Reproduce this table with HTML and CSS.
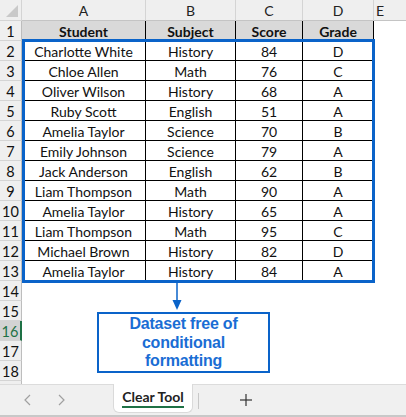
FILE: index.html
```html
<!DOCTYPE html>
<html>
<head>
<meta charset="utf-8">
<link rel="stylesheet" href="styles.css">
</head>
<body>
<div class="app">
  <div class="sheet">
    <div class="grid">
      <div class="corner"><svg width="22" height="21" viewBox="0 0 22 21"><polygon points="18,5 18,17 6,17" fill="#c9c9c9"/></svg></div>
      <div class="ch">A</div><div class="ch">B</div><div class="ch">C</div><div class="ch">D</div><div class="ch ch-e">E</div>

      <div class="rh">1</div><div class="hd">Student</div><div class="hd">Subject</div><div class="hd">Score</div><div class="hd">Grade</div><div class="ec"></div>
      <div class="rh">2</div><div class="dc">Charlotte White</div><div class="dc">History</div><div class="dc">84</div><div class="dc">D</div><div class="ec"></div>
      <div class="rh">3</div><div class="dc">Chloe Allen</div><div class="dc">Math</div><div class="dc">76</div><div class="dc">C</div><div class="ec"></div>
      <div class="rh">4</div><div class="dc">Oliver Wilson</div><div class="dc">History</div><div class="dc">68</div><div class="dc">A</div><div class="ec"></div>
      <div class="rh">5</div><div class="dc">Ruby Scott</div><div class="dc">English</div><div class="dc">51</div><div class="dc">A</div><div class="ec"></div>
      <div class="rh">6</div><div class="dc">Amelia Taylor</div><div class="dc">Science</div><div class="dc">70</div><div class="dc">B</div><div class="ec"></div>
      <div class="rh">7</div><div class="dc">Emily Johnson</div><div class="dc">Science</div><div class="dc">79</div><div class="dc">A</div><div class="ec"></div>
      <div class="rh">8</div><div class="dc">Jack Anderson</div><div class="dc">English</div><div class="dc">62</div><div class="dc">B</div><div class="ec"></div>
      <div class="rh">9</div><div class="dc">Liam Thompson</div><div class="dc">Math</div><div class="dc">90</div><div class="dc">A</div><div class="ec"></div>
      <div class="rh">10</div><div class="dc">Amelia Taylor</div><div class="dc">History</div><div class="dc">65</div><div class="dc">A</div><div class="ec"></div>
      <div class="rh">11</div><div class="dc">Liam Thompson</div><div class="dc">Math</div><div class="dc">95</div><div class="dc">C</div><div class="ec"></div>
      <div class="rh">12</div><div class="dc">Michael Brown</div><div class="dc">History</div><div class="dc">82</div><div class="dc">D</div><div class="ec"></div>
      <div class="rh">13</div><div class="dc">Amelia Taylor</div><div class="dc">History</div><div class="dc">84</div><div class="dc">A</div><div class="ec"></div>
      <div class="rh">14</div><div class="blank"></div>
      <div class="rh">15</div><div class="blank"></div>
      <div class="rh rh-sel">16</div><div class="blank"></div>
      <div class="rh">17</div><div class="blank"></div>
      <div class="rh">18</div><div class="blank"></div>
      <div class="rh"></div><div class="blank"></div>
    </div>
    <div class="range"></div>
    <svg class="arrow" width="12" height="30" viewBox="0 0 12 30"><line x1="6" y1="0" x2="6" y2="20" stroke="#0a63c9" stroke-width="1.5"/><polygon points="1.5,18 10.5,18 6,28" fill="#0a63c9"/></svg>
    <div class="callout">Dataset free of<br>conditional<br>formatting</div>
  </div>
  <div class="tabbar">
    <div class="nav">
      <svg width="10" height="14" viewBox="0 0 10 14"><polyline points="7,2 2,7 7,12" fill="none" stroke="#a0a0a0" stroke-width="1.2"/></svg>
      <svg width="10" height="14" viewBox="0 0 10 14"><polyline points="3,2 8,7 3,12" fill="none" stroke="#a0a0a0" stroke-width="1.2"/></svg>
    </div>
    <div class="tab">Clear Tool</div>
    <div class="sep"></div>
    <div class="add"><svg width="14" height="14" viewBox="0 0 14 14"><line x1="7" y1="1" x2="7" y2="13" stroke="#333" stroke-width="1.2"/><line x1="1" y1="7" x2="13" y2="7" stroke="#333" stroke-width="1.2"/></svg></div>
  </div>
</div>
</body>
</html>
```

FILE: styles.css
```css
* { box-sizing: border-box; }
html, body { margin: 0; padding: 0; background: #fff; }
.app { width: 406px; height: 417px; overflow: hidden; font-family: Lato, "Open Sans", sans-serif; }
.sheet { position: relative; height: 384px; overflow: hidden; }
.grid {
  display: grid;
  grid-template-columns: 22px 124px 90px 67px 71px 32px;
  grid-template-rows: 21px repeat(19, 20px);
}
.corner { background: #efefef; border-right: 1px solid #d4d4d4; border-bottom: 1px solid #d4d4d4; }
.corner svg { display: block; }
.ch {
  background: #efefef; border-right: 1px solid #d4d4d4; border-bottom: 1px solid #c4c4c4;
  display: flex; align-items: center; justify-content: center;
  font-size: 14px; color: #222;
}
.ch-e { justify-content: flex-start; padding-left: 2px; border-right: none; }
.rh {
  background: #efefef; border-right: 1px solid #bdbdbd; border-bottom: 1px solid #d4d4d4;
  display: flex; align-items: center; justify-content: center;
  font-size: 14.5px; color: #111; padding-top: 1px;
}
.rh-sel { background: #d3d3d3; color: #1e7145; border-right: 2px solid #1e7145; }
.hd, .dc {
  border-right: 1px solid #000; border-bottom: 1px solid #000;
  display: flex; align-items: center; justify-content: center;
  font-size: 14px; color: #111; white-space: nowrap; padding-top: 1px;
}
.hd { background: #d9d9d9; font-weight: 700; }
.ec { background: #fff; }
.blank { grid-column: 2 / 7; background: #fff; }
.range {
  position: absolute; left: 22px; top: 39px; width: 353px; height: 244px;
  border: 3px solid #0a63c9;
}
.arrow { position: absolute; left: 171px; top: 282px; }
.callout {
  position: absolute; left: 97px; top: 312px; width: 173px; height: 61px;
  border: 2px solid #0a63c9; background: #fff;
  font-family: "Liberation Sans", Arial, sans-serif; font-weight: 700; font-size: 16px;
  line-height: 18.5px; color: #1a6dd4; text-align: center; letter-spacing: -0.2px;
  padding-top: 1px;
}
.tabbar {
  height: 33px; background: #f0f0f0; border-top: 1px solid #dcdcdc; border-bottom: 2px solid #c8c8c8;
  display: flex; align-items: flex-start; position: relative;
}
.nav { width: 113px; display: flex; gap: 23px; padding-left: 23px; padding-top: 8px; }
.nav svg { display: block; }
.tab {
  margin-top: -1px; width: 80px; height: 29px; background: #fff;
  border: 1px solid #dadada; border-top: none; border-radius: 0 0 6px 6px;
  font-size: 14px; font-weight: 700; color: #222;
  display: flex; align-items: center; justify-content: center; position: relative; padding-bottom: 3px;
}
.tab::after {
  content: ""; position: absolute; left: 8px; right: 8px; bottom: 4px; height: 2px; background: #1e7145;
}
.sep { width: 1px; height: 16px; background: #c8c8c8; margin: 8px 0 0 5px; }
.add { margin-left: 40px; padding-top: 8px; }
.add svg { display: block; }
```
